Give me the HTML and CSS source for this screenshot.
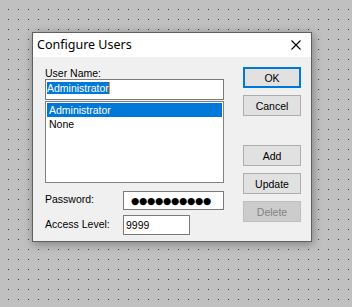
FILE: index.html
```html
<!DOCTYPE html>
<html lang="en">
<head>
    <meta charset="UTF-8">
    <title>Configure Users</title>
    <link rel="stylesheet" href="styles.css">
</head>
<body>
    <div class="dialog">
        <div class="title-bar">
            <span class="title">Configure Users</span>
            <svg class="close-icon" width="10" height="10" viewBox="0 0 10 10">
                <path d="M0.5 0.5 L9.5 9.5 M9.5 0.5 L0.5 9.5" stroke="#000" stroke-width="1.1" fill="none"/>
            </svg>
        </div>

        <div class="client">
            <div class="left-col">
                <div class="label">User Name:</div>
                <div class="edit name-edit"><span class="selected">Administrator</span></div>

                <div class="listbox">
                    <div class="list-item active">Administrator</div>
                    <div class="list-item">None</div>
                </div>

                <div class="field-row password-row">
                    <span class="label">Password:</span>
                    <div class="edit password-edit">●●●●●●●●●●</div>
                </div>

                <div class="field-row level-row">
                    <span class="label">Access Level:</span>
                    <div class="edit level-edit">9999</div>
                </div>
            </div>

            <div class="button-col">
                <button class="btn default">OK</button>
                <button class="btn">Cancel</button>
                <button class="btn spaced">Add</button>
                <button class="btn">Update</button>
                <button class="btn disabled">Delete</button>
            </div>
        </div>
    </div>
</body>
</html>
```

FILE: styles.css
```css
body {
    margin: 0;
    padding: 32px 0 0 32px;
    width: 352px;
    height: 307px;
    box-sizing: border-box;
    overflow: hidden;
    background-color: #c0c0c0;
    background-image:
        linear-gradient(to right, transparent 1px, #c0c0c0 1px),
        linear-gradient(#3a3a3a 1px, #c0c0c0 1px);
    background-size: 10px 10px;
    background-position: 8px 9px;
    font-family: "Liberation Sans", Arial, sans-serif;
    font-size: 10.5px;
    color: #000;
}

.dialog {
    width: 280px;
    height: 210px;
    box-sizing: border-box;
    border: 1px solid #5f5f5f;
    background: #f0f0f0;
    box-shadow: 1px 2px 9px rgba(0, 0, 0, 0.35);
}

.title-bar {
    height: 24px;
    background: #fff;
    display: flex;
    align-items: center;
    justify-content: space-between;
    padding: 0 10px 0 4px;
}

.title {
    font-family: "Noto Sans", "Open Sans", sans-serif;
    font-size: 12.5px;
    margin-top: -1px;
}

.close-icon {
    display: block;
}

.client {
    display: flex;
    padding: 10px 9px 0 12px;
    gap: 19px;
}

.left-col {
    width: 179px;
    display: flex;
    flex-direction: column;
}

.label {
    line-height: 12px;
    height: 12px;
    white-space: nowrap;
}

.edit {
    background: #fff;
    border: 1px solid #7a7a7a;
    box-sizing: border-box;
    white-space: nowrap;
    overflow: hidden;
}

.name-edit {
    height: 21px;
    padding: 2px 1px;
    line-height: 12px;
}

.selected {
    display: inline-block;
    background: #0078d7;
    color: #fff;
    border-right: 1px solid #f7931e;
}

.listbox {
    margin-top: 1px;
    height: 82px;
    box-sizing: border-box;
    border: 1px solid #828282;
    background: #fff;
    padding: 1px;
}

.list-item {
    height: 14px;
    line-height: 14px;
    padding-left: 2px;
}

.list-item.active {
    background: #0078d7;
    color: #fff;
}

.field-row {
    display: flex;
    align-items: center;
    justify-content: space-between;
}

.password-row {
    margin-top: 8px;
}

.level-row {
    margin-top: 5px;
}

.field-row .label {
    margin-top: -3px;
}

.password-edit {
    width: 101px;
    height: 19px;
    line-height: 17px;
    padding-left: 7px;
    font-family: "DejaVu Sans", sans-serif;
    font-size: 9.5px;
    letter-spacing: -0.3px;
}

.level-edit {
    width: 67px;
    height: 20px;
    line-height: 18px;
    padding-left: 2px;
    margin-right: 34px;
}

.button-col {
    display: flex;
    flex-direction: column;
    gap: 7px;
}

.btn {
    width: 58px;
    height: 21px;
    padding: 0;
    margin: 0;
    background: #e1e1e1;
    border: 1px solid #adadad;
    font-family: "Liberation Sans", Arial, sans-serif;
    font-size: 10.5px;
    color: #000;
}

.btn.default {
    border: 2px solid #0078d7;
}

.btn.spaced {
    margin-top: 22px;
}

.btn.disabled {
    background: #cccccc;
    border-color: #bfbfbf;
    color: #838383;
}
```
